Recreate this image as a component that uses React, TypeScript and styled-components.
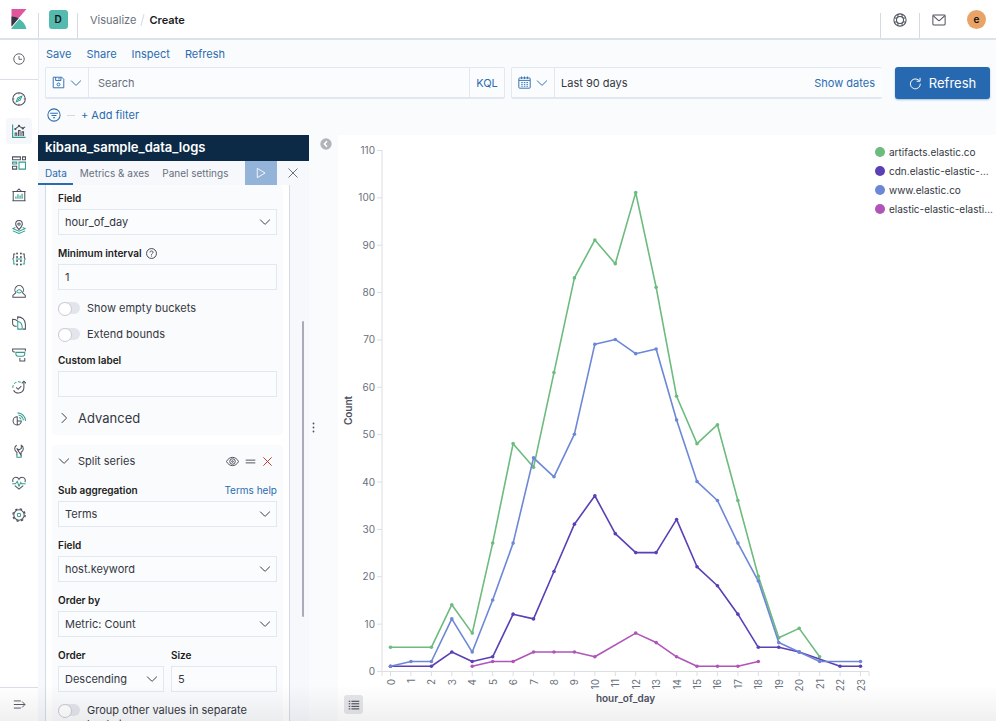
import React, { useId, useLayoutEffect, useRef, useState } from 'react'
import styled, { createGlobalStyle, css } from 'styled-components'

const blue = '#2a6cb0'
const teal = '#2f9c8d'
const ink = '#343741'
const iconInk = '#4b505c'
const muted = '#69707d'
const line = '#e3e7f0'
const pageBg = '#fafbfd'

const GlobalStyle = createGlobalStyle`
  * {
    box-sizing: border-box;
  }
  body {
    margin: 0;
    background: ${pageBg};
    color: ${ink};
    font-family: Inter, 'Liberation Sans', sans-serif;
    font-size: 11px;
    line-height: 16px;
  }
  button,
  input,
  select {
    margin: 0;
    padding: 0;
    border: 0;
    border-radius: 0;
    background: none;
    color: inherit;
    font: inherit;
  }
  button {
    cursor: pointer;
  }
  a {
    color: ${blue};
    text-decoration: none;
  }
  svg {
    display: block;
    flex: none;
  }
`

/* ---------- icons ---------- */

type IconProps = { size?: number; children: React.ReactNode; width?: number }

const Icon: React.FC<IconProps> = ({ size = 14, width = 1.15, children }) => (
  <svg
    width={size}
    height={size}
    viewBox="0 0 16 16"
    fill="none"
    stroke="currentColor"
    strokeWidth={width}
    aria-hidden="true"
  >
    {children}
  </svg>
)

const ChevronDown = () => (
  <Icon size={12} width={1.3}>
    <path d="M1.5 4.8 L7.4 10.7 Q8 11.2 8.6 10.7 L14.5 4.8" />
  </Icon>
)

const ChevronRight = () => (
  <Icon size={12} width={1.3}>
    <path d="M5 1.5 L10.9 7.4 Q11.4 8 10.9 8.6 L5 14.5" />
  </Icon>
)

const CrossIcon = ({ size = 12 }: { size?: number }) => (
  <Icon size={size} width={1.3}>
    <path d="M2 2 L14 14 M14 2 L2 14" />
  </Icon>
)

const KibanaLogo = () => (
  <svg width="16" height="20" viewBox="0 0 16 20" aria-hidden="true">
    <path d="M0.5 0 H15.5 L0.5 17.5 Z" fill="#e0559c" />
    <path d="M0.5 7.5 C3.2 7.5 5.5 8.2 7.5 9.4 L0.5 17.5 Z" fill="#343741" />
    <path d="M8.3 9.9 C12 12.2 14.5 15.7 15.4 20 H0.5 V19 Z" fill="#4fb9ac" />
  </svg>
)

const navIcons: { name: string; art: React.ReactNode }[] = [
  {
    name: 'Discover',
    art: (
      <>
        <circle cx="8" cy="8" r="7.2" />
        <path d="M8 1v1.6M8 13.4V15M1 8h1.6M13.4 8H15" />
        <path d="M11.2 4.8 L9.4 9.4 L4.8 11.2 L6.6 6.6 Z" stroke={teal} />
        <path d="M6.9 9.1 L9.1 6.9" stroke={teal} />
      </>
    ),
  },
  {
    name: 'Visualize',
    art: (
      <>
        <path d="M0.7 0.5 V15.3 H15.5" stroke={teal} strokeWidth="1.3" />
        <path d="M3.6 13.6V10.2h1.8v3.4M7.4 13.6V7.4h1.8v6.2M11.4 13.6V9h1.8v4.6" />
        <path d="M3.8 5.6 L8 2.4 L12.3 5 L15 3.2" />
        <g fill={iconInk} stroke="none">
          <circle cx="3.8" cy="5.8" r="1.3" />
          <circle cx="8" cy="2.2" r="1.3" />
          <circle cx="12.4" cy="5" r="1.3" />
        </g>
      </>
    ),
  },
  {
    name: 'Dashboard',
    art: (
      <>
        <path d="M0.6 1 H9.6 V4.4 H0.6 Z M12 1 H15.4 V4.4 H12 Z" />
        <path d="M0.6 7 H5.4 V9.2 H0.6 Z" stroke={teal} />
        <path d="M0.6 11.8 H5.4 V15 H0.6 Z" />
        <path d="M8 7 H15.4 V15 H8 Z" stroke={teal} />
      </>
    ),
  },
  {
    name: 'Canvas',
    art: (
      <>
        <path d="M0.4 4 H15.6 M0.4 14.6 H15.6 M1.4 4 V14.6 M14.6 4 V14.6" />
        <path d="M5 4 L8 1 L11 4" />
        <path d="M4.5 12.4V9.6M6.8 12.4V7M9.2 12.4V8.6M11.5 12.4V6.6" stroke={teal} strokeWidth="1.3" />
      </>
    ),
  },
  {
    name: 'Maps',
    art: (
      <>
        <path d="M8 11 C5.3 8.4 4.2 6.7 4.2 4.6 A3.8 3.9 0 0 1 11.8 4.6 C11.8 6.7 10.7 8.4 8 11 Z" />
        <circle cx="8" cy="4.7" r="1.4" />
        <path d="M3.8 8.6 L1 9.9 L8 12.8 L15 9.9 L12.2 8.6 M1 12.4 L8 15.3 L15 12.4" stroke={teal} />
      </>
    ),
  },
  {
    name: 'Machine Learning',
    art: (
      <>
        <g fill={iconInk} stroke="none">
          <circle cx="5.8" cy="1.8" r="1.1" />
          <circle cx="10.2" cy="1.8" r="1.1" />
          <circle cx="5.8" cy="5.8" r="1.1" />
          <circle cx="10.2" cy="5.8" r="1.1" />
          <circle cx="5.8" cy="10.2" r="1.1" />
          <circle cx="10.2" cy="10.2" r="1.1" />
          <circle cx="5.8" cy="14.2" r="1.1" />
          <circle cx="10.2" cy="14.2" r="1.1" />
        </g>
        <path d="M3.8 2.4 H2 V6 L0.9 8 M12.2 2.4 H14 V6 L15.1 8" />
        <path d="M0.9 8 L2 10 V13.6 H3.8 M15.1 8 L14 10 V13.6 H12.2 M4.4 8 H11.6" stroke={teal} />
      </>
    ),
  },
  {
    name: 'Metrics',
    art: (
      <>
        <path d="M4.6 10 A4.9 4.9 0 1 1 11.8 10" />
        <path d="M4.6 9.8 L1 13 V15.2 H15.2 V13 L11.8 9.8" />
        <path d="M5.2 8.6 Q8.2 4.8 11.4 8.6 Q8.2 12 5.2 8.6" stroke={teal} />
      </>
    ),
  },
  {
    name: 'Logs',
    art: (
      <>
        <path d="M6.5 4 V1 C11.5 1 15.3 4.6 15.3 9.4 V15 H12.6" />
        <path d="M5.4 11.6 H4 C2 11.6 0.7 10 0.7 8 V3.6 C3 3.6 5.4 4.4 6.6 6" />
        <path d="M6.6 15 V6 C10 7 11.7 9.6 11.7 13 V15 Z" stroke={teal} />
      </>
    ),
  },
  {
    name: 'APM',
    art: (
      <>
        <path d="M3.4 4.6 H2.4 Q0.7 4.6 0.7 3.2 V1.2 H15.3 V3.6" />
        <path d="M4.4 5 H14.6 V6.6 Q14.6 9.4 12 9.4 H7 Q4.4 9.4 4.4 6.6 Z" stroke={teal} />
        <path d="M9 11.4 V14.8 H14.6 V11.4" />
      </>
    ),
  },
  {
    name: 'Uptime',
    art: (
      <>
        <path d="M13.6 2.2 V8.6 A6.3 6.3 0 0 1 1.8 11.6" />
        <path d="M11.2 3.8 L13.6 1.4 L16 3.8" />
        <path d="M1 9 A6.4 6.4 0 0 1 10 2.6" stroke={teal} strokeDasharray="3.2 1.8" />
        <path d="M4.8 8.4 L7 10.6 L10.6 7" />
      </>
    ),
  },
  {
    name: 'SIEM',
    art: (
      <>
        <path d="M6 5.4 A4.7 4.7 0 1 0 10.6 10.4 H6 Z M6 10 V14.8" />
        <path
          d="M6.4 1 A9 9 0 0 1 15.4 10.4 M7.4 3.4 A6.9 6.9 0 0 1 13 9.6 M8.2 6.2 A4 4 0 0 1 10.4 8.4"
          stroke={teal}
        />
      </>
    ),
  },
  {
    name: 'Dev Tools',
    art: (
      <>
        <path d="M5.4 1.4 C2.4 3 2.2 7.6 5.6 9.4 V12.8 M10.4 12.8 V9.4 C13.8 7.6 13.6 3 10.6 1.4 V5.2 L8 6.8 L5.4 5.2 Z" />
        <path d="M5.6 12.6 V15.2 H10.4 V12.6" stroke={teal} />
      </>
    ),
  },
  {
    name: 'Stack Monitoring',
    art: (
      <>
        <path d="M1.2 7 C0 3.6 2.2 1.4 4.4 1.4 C6.2 1.4 7.4 2.4 8 3.8 C8.6 2.4 9.8 1.4 11.6 1.4 C13.8 1.4 16 3.6 14.8 7" />
        <path d="M3.2 11 L8 15 L12.8 11" />
        <path d="M0.4 8.8 H4 L6 6 L8 11.6 L10 7.4 L11 8.8 H15.6" stroke={teal} />
      </>
    ),
  },
  {
    name: 'Management',
    art: (
      <>
        <circle cx="8" cy="8" r="5.9" />
        <circle cx="8" cy="8" r="7" strokeDasharray="2.75 2.75" strokeWidth="1.5" />
        <circle cx="8" cy="8" r="2" stroke={teal} />
      </>
    ),
  },
]

/* ---------- shell ---------- */

const Page = styled.div`
  display: flex;
  flex-direction: column;
  height: 100vh;
  overflow: hidden;
  position: relative;

  &::after {
    content: '';
    position: absolute;
    inset: auto 0 0 0;
    height: 36px;
    background: linear-gradient(rgba(40, 44, 52, 0), rgba(40, 44, 52, 0.07));
    pointer-events: none;
  }
`

const Header = styled.header`
  display: flex;
  align-items: center;
  height: 40px;
  flex: none;
  background: #fff;
  border-bottom: 2px solid #dde1eb;
`

const LogoLink = styled.a`
  display: flex;
  justify-content: center;
  width: 38px;
`

const HeaderSection = styled.div`
  display: flex;
  align-items: center;
  justify-content: center;
  align-self: flex-end;
  width: 39px;
  height: 25px;
  padding-bottom: 12px;
  border-left: 1px solid #d3dae6;
  color: ${iconInk};
`

const Badge = styled.button<{ $round?: boolean }>`
  flex: none;
  width: 19px;
  height: 19px;
  border-radius: ${p => (p.$round ? '50%' : '3px')};
  background: ${p => (p.$round ? '#e9a367' : '#54b9ae')};
  color: #111;
  font-size: 10px;
  font-weight: 600;
  line-height: 19px;
`

const Breadcrumbs = styled.nav`
  display: flex;
  flex: 1;
  align-self: flex-end;
  align-items: center;
  height: 25px;
  padding: 0 0 12px 12px;
  gap: 6px;
  border-left: 1px solid #d3dae6;

  a {
    color: ${muted};
  }
  i {
    width: 1px;
    height: 12px;
    background: #d3dae6;
    transform: rotate(15deg);
  }
  strong {
    color: #1a1c21;
    font-weight: 600;
  }
`

const IconButton = styled.button`
  display: flex;
  align-items: center;
  justify-content: center;
`

const HeaderUser = styled.div`
  padding: 0 10px 0 9px;
`

const Columns = styled.div`
  display: flex;
  flex: 1;
  min-height: 0;
`

const SideNav = styled.nav`
  display: flex;
  flex-direction: column;
  flex: none;
  width: 38px;
  background: #fff;
  box-shadow: 1px 0 0 #eceff5;
`

const NavGroup = styled.div<{ $edge?: 'top' | 'bottom' }>`
  display: flex;
  align-items: center;
  justify-content: center;
  height: ${p => (p.$edge === 'top' ? 34 : 40)}px;
  ${p => p.$edge === 'top' && 'border-top: 1px solid #d9deea;'}
  ${p => p.$edge === 'bottom' && 'border-bottom: 1px solid #d9deea; padding-bottom: 2px;'}
  color: ${iconInk};
`

const NavList = styled.ul`
  flex: 1;
  margin: 0;
  padding: 3px 0 0;
  list-style: none;
`

const NavItem = styled.li`
  display: flex;
  align-items: center;
  justify-content: center;
  height: 32px;
`

const NavLink = styled.a<{ $active: boolean }>`
  display: flex;
  align-items: center;
  justify-content: center;
  width: 26px;
  height: 26px;
  border-radius: 3px;
  background: ${p => (p.$active ? '#f5f7fa' : 'none')};
  color: ${iconInk};
`

const Main = styled.main`
  display: flex;
  flex-direction: column;
  flex: 1;
  min-width: 0;
`

/* ---------- top bars ---------- */

const Menu = styled.div`
  display: flex;
  align-items: center;
  gap: 15px;
  padding: 0 8px;
  height: 27px;
  color: ${blue};
`

const QueryBar = styled.div`
  display: grid;
  grid-template-columns: minmax(0, 1.24fr) minmax(0, 1fr) auto;
  column-gap: 6px;
  padding: 0 6px 0 7px;
`

const FieldGroup = styled.div<{ $open?: boolean }>`
  display: flex;
  height: 32px;
  border: 1px solid ${line};
  border-bottom-width: 2px;
  border-radius: 2px;
  background: #fbfcfe;
  ${p => p.$open && 'border-right: 0;'}
`

const GroupButton = styled.button<{ $side: 'left' | 'right' }>`
  display: flex;
  align-items: center;
  justify-content: center;
  gap: 5px;
  flex: none;
  width: ${p => (p.$side === 'left' ? 43 : 35)}px;
  color: ${blue};
  ${p => (p.$side === 'left' ? 'border-right' : 'border-left')}: 1px solid ${line};
`

const SearchInput = styled.input`
  flex: 1;
  min-width: 0;
  padding: 0 9px;
  outline: none;

  &::placeholder {
    color: ${muted};
    opacity: 1;
  }
`

const RangeButton = styled.button`
  flex: 1;
  padding-left: 6px;
  text-align: left;
`

const TextButton = styled.button`
  padding-right: 7px;
  color: ${blue};
`

const RefreshButton = styled.button`
  display: flex;
  align-items: center;
  justify-content: center;
  gap: 7px;
  width: 95px;
  height: 32px;
  margin-left: 7px;
  border-radius: 3px;
  background: #2769b0;
  box-shadow: 0 1px 2px rgba(39, 105, 176, 0.4);
  color: #fff;
  font-size: 13px;
`

const FilterRow = styled.div`
  display: flex;
  align-items: center;
  gap: 6px;
  height: 36px;
  padding: 0 9px 4px;
  color: ${blue};

  i {
    width: 8px;
    height: 1px;
    background: #d3dae6;
  }
`

/* ---------- editor ---------- */

const Workspace = styled.div`
  display: flex;
  flex: 1;
  min-height: 0;
`

const Editor = styled.section`
  display: flex;
  flex-direction: column;
  flex: none;
  width: 271px;
  min-height: 0;
  background: #f6f8fc;
`

const EditorTitle = styled.h1`
  flex: none;
  margin: 0;
  height: 26px;
  padding-left: 7px;
  background: #0c2a46;
  color: #fff;
  font-size: 13px;
  font-weight: 600;
  line-height: 25px;
`

const Tabs = styled.div`
  display: flex;
  flex: none;
  height: 24px;
  font-size: 10px;
`

const Tab = styled.button<{ $active?: boolean }>`
  padding: 0 6px 0 7px;
  color: ${muted};
  white-space: nowrap;
  ${p =>
    p.$active &&
    css`
      color: ${blue};
      border-bottom: 2px solid ${blue};
      padding-top: 2px;
    `}
`

const ApplyButton = styled(IconButton)`
  width: 32px;
  margin-left: auto;
  background: #93b3d8;
  color: #fff;
`

const DiscardButton = styled(IconButton)`
  width: 32px;
  color: ${muted};
`

const EditorBody = styled.div`
  display: flex;
  flex: 1;
  min-height: 0;
  overflow: hidden;
  padding-left: 7px;
`

const Card = styled.div`
  display: flex;
  flex-direction: column;
  gap: 10px;
  width: 245px;
  padding: 0 6px;
  height: max-content;
  border: 1px solid #d5dae8;
  border-top: 0;
  background: #fff;
`

const Scrollbar = styled.div`
  width: 2px;
  height: 296px;
  margin: 136px 0 0 12px;
  border-radius: 1px;
  background: #a9acb8;
`

const Bucket = styled.div`
  display: flex;
  flex-direction: column;
  gap: 10px;
  padding: 5px 6px 6px;
  border-radius: 4px;
  background: ${pageBg};
`

const BucketHead = styled.div`
  display: flex;
  align-items: center;
  height: 22px;
  gap: 6px;
  padding-right: 4px;
  color: ${iconInk};
`

const BucketToggle = styled.button<{ $large?: boolean }>`
  display: flex;
  align-items: center;
  gap: 8px;
  flex: 1;
  color: ${ink};
  font-size: ${p => (p.$large ? 13 : 11)}px;
`

const RemoveButton = styled(IconButton)`
  color: #bd271e;
`

const FormField = styled.div`
  display: flex;
  flex: 1;
  flex-direction: column;
  gap: 3px;
  min-width: 0;
`

const LabelRow = styled.div`
  display: flex;
  align-items: center;
  gap: 4px;
  height: 16px;
  font-size: 10px;

  label {
    color: #1a1c21;
    font-weight: 600;
  }
  a {
    margin-left: auto;
  }
`

const controlStyle = css`
  width: 100%;
  height: 26px;
  padding: 0 6px;
  border: 1px solid ${line};
  background: #fbfcfe;
  outline: none;
`

const TextInput = styled.input`
  ${controlStyle}
`

const SelectWrap = styled.div`
  position: relative;

  select {
    ${controlStyle}
    appearance: none;
  }
  svg {
    position: absolute;
    top: 7px;
    right: 6px;
    pointer-events: none;
  }
`

const FieldPair = styled.div`
  display: flex;
  gap: 7px;
`

const ToggleRow = styled.label`
  display: flex;
  align-items: flex-start;
  gap: 7px;
  min-height: 16px;
  padding-top: 1px;
  line-height: 14px;
`

const Toggle = styled.input`
  appearance: none;
  display: flex;
  flex: none;
  width: 22px;
  height: 12px;
  margin-top: 1px;
  border-radius: 6px;
  background: #e3e5ec;

  &::before {
    content: '';
    width: 12px;
    height: 12px;
    border: 1px solid #c9ccd5;
    border-radius: 50%;
    background: #fff;
  }
  &:checked {
    justify-content: flex-end;
    background: ${blue};
  }
`

const Gutter = styled.div`
  display: flex;
  flex-direction: column;
  flex: none;
  width: 29px;
  padding-top: 3px;
  color: ${iconInk};
`

const CollapseButton = styled(IconButton)`
  width: 12px;
  height: 12px;
  margin-left: 11px;
`

const Resizer = styled.div`
  display: flex;
  flex: 1;
  align-items: center;
  padding: 0 0 16px 3px;
`

/* ---------- chart ---------- */

const Visualization = styled.section`
  display: flex;
  flex: 1;
  min-width: 0;
  position: relative;
  background: #fff;
`

const ChartBox = styled.div`
  flex: 1;
  min-width: 0;
  overflow: hidden;

  text {
    fill: ${muted};
    font-size: 10px;
  }
  text.title {
    fill: #4d515e;
    font-weight: 600;
  }
`

const Legend = styled.ul`
  flex: none;
  width: 121px;
  margin: 0;
  padding: 7px 2px 0 0;
  list-style: none;
  font-size: 10px;
`

const LegendItem = styled.li<{ $color: string }>`
  display: flex;
  align-items: center;
  gap: 4px;
  height: 19px;

  &::before {
    content: '';
    flex: none;
    width: 10px;
    height: 10px;
    border-radius: 50%;
    background: ${p => p.$color};
  }
  span {
    overflow: hidden;
    text-overflow: ellipsis;
    white-space: nowrap;
  }
`

const LegendToggle = styled(IconButton)`
  position: absolute;
  left: 6px;
  bottom: 7px;
  width: 19px;
  height: 19px;
  border-radius: 3px;
  background: #e4e6ea;
  color: ${ink};
`

type Series = { name: string; color: string; points: [number, number][] }

const fromValues = (start: number, values: (number | null)[]) =>
  values
    .map((v, i) => [start + i, v] as [number, number | null])
    .filter((p): p is [number, number] => p[1] !== null)

const series: Series[] = [
  {
    name: 'artifacts.elastic.co',
    color: '#6dbb7e',
    points: fromValues(0, [5, null, 5, 14, 8, 27, 48, 43, 63, 83, 91, 86, 101, 81, 58, 48, 52, 36, 20, 7, 9, 3]),
  },
  {
    name: 'cdn.elastic-elastic-elastic.org',
    color: '#5b3fb5',
    points: fromValues(0, [1, null, 1, 4, 2, 3, 12, 11, 21, 31, 37, 29, 25, 25, 32, 22, 18, 12, 5, 5, 4, null, 1, 1]),
  },
  {
    name: 'www.elastic.co',
    color: '#6c87d6',
    points: fromValues(0, [1, 2, 2, 11, 4, 15, 27, 45, 41, 50, 69, 70, 67, 68, 53, 40, 36, 27, 19, 6, 4, 2, null, 2]),
  },
  {
    name: 'elastic-elastic-elastic.org',
    color: '#b055b8',
    points: fromValues(4, [1, 2, 2, 4, 4, 4, 3, null, 8, 6, 3, 1, 1, 1, 2]),
  },
]

const yMax = 110
const hours = Array.from({ length: 24 }, (_, i) => i)
const counts = Array.from({ length: 12 }, (_, i) => i * 10)
const pad = { top: 15, right: 6, bottom: 50, left: 44 }

const LineChart = () => {
  const box = useRef<HTMLDivElement>(null)
  const [size, setSize] = useState({ width: 0, height: 0 })

  useLayoutEffect(() => {
    const el = box.current
    if (!el) return
    const measure = () => setSize({ width: el.clientWidth, height: el.clientHeight })
    measure()
    const observer = new ResizeObserver(measure)
    observer.observe(el)
    return () => observer.disconnect()
  }, [])

  const right = size.width - pad.right
  const bottom = size.height - pad.bottom
  const x = (hour: number) => pad.left + 8.5 + (hour * (right - pad.left - 17)) / 23
  const y = (count: number) => bottom - (count * (bottom - pad.top)) / yMax
  const middleX = (pad.left + right) / 2
  const middleY = (pad.top + bottom) / 2

  return (
    <ChartBox ref={box}>
      {size.width > 0 && (
        <svg width={size.width} height={size.height} role="img" aria-label="Count by hour_of_day">
          <g stroke="#dcdee3" fill="none">
            <path d={`M${pad.left} ${pad.top} V${bottom + 5} M${pad.left} ${bottom + 0.5} H${right} V${bottom + 5}`} />
            {counts.map(c => (
              <path key={c} d={`M${pad.left - 5} ${y(c) + 0.5} H${pad.left}`} />
            ))}
            {hours.map(h => (
              <path key={h} d={`M${x(h)} ${bottom} V${bottom + 5}`} />
            ))}
          </g>
          {counts.map(c => (
            <text key={c} x={pad.left - 7} y={y(c) + 4} textAnchor="end">
              {c}
            </text>
          ))}
          {hours.map(h => (
            <text key={h} transform={`translate(${x(h) + 4} ${bottom + 8}) rotate(-90)`} textAnchor="end">
              {h}
            </text>
          ))}
          <text className="title" x={middleX} y={bottom + 31} textAnchor="middle">
            hour_of_day
          </text>
          <text className="title" transform={`translate(14 ${middleY}) rotate(-90)`} textAnchor="middle">
            Count
          </text>
          {series.map(s => (
            <g key={s.name}>
              <polyline
                points={s.points.map(([h, c]) => `${x(h)},${y(c)}`).join(' ')}
                fill="none"
                stroke={s.color}
                strokeWidth="1.6"
                strokeLinejoin="round"
              />
              {s.points.map(([h, c]) => (
                <circle key={h} cx={x(h)} cy={y(c)} r="1.8" fill={s.color} />
              ))}
            </g>
          ))}
        </svg>
      )}
    </ChartBox>
  )
}

/* ---------- form parts ---------- */

type FieldProps = { label: string; value: string; aside?: React.ReactNode }

const SelectField: React.FC<FieldProps> = ({ label, value, aside }) => {
  const id = useId()
  return (
    <FormField>
      <LabelRow>
        <label htmlFor={id}>{label}</label>
        {aside}
      </LabelRow>
      <SelectWrap>
        <select id={id} defaultValue={value}>
          <option>{value}</option>
        </select>
        <ChevronDown />
      </SelectWrap>
    </FormField>
  )
}

const InputField: React.FC<FieldProps> = ({ label, value, aside }) => {
  const id = useId()
  return (
    <FormField>
      <LabelRow>
        <label htmlFor={id}>{label}</label>
        {aside}
      </LabelRow>
      <TextInput id={id} defaultValue={value} />
    </FormField>
  )
}

const ToggleField: React.FC<{ label: string }> = ({ label }) => (
  <ToggleRow>
    <Toggle type="checkbox" role="switch" />
    <span>{label}</span>
  </ToggleRow>
)

const HelpIcon = () => (
  <Icon size={11} width={1.3}>
    <circle cx="8" cy="8" r="7.2" />
    <path d="M5.8 6.4 C5.8 3.6 10.2 3.6 10.2 6.3 C10.2 8 8 8 8 9.8 M8 11 V12.4" />
  </Icon>
)

const App = () => (
  <>
    <GlobalStyle />
    <Page>
      <Header>
        <LogoLink href="#" aria-label="Kibana home">
          <KibanaLogo />
        </LogoLink>
        <HeaderSection>
          <Badge aria-label="Default space">D</Badge>
        </HeaderSection>
        <Breadcrumbs aria-label="Breadcrumbs">
          <a href="#">Visualize</a>
          <i />
          <strong>Create</strong>
        </Breadcrumbs>
        <HeaderSection>
          <IconButton aria-label="Help">
            <Icon>
              <circle cx="8" cy="8" r="7" />
              <circle cx="8" cy="8" r="4" />
              <path d="M5.6 1.4V4.8M10.4 1.4V4.8M5.6 14.6V11.2M10.4 14.6V11.2M1.4 5.6H4.8M1.4 10.4H4.8M14.6 5.6H11.2M14.6 10.4H11.2" />
            </Icon>
          </IconButton>
        </HeaderSection>
        <HeaderSection>
          <IconButton aria-label="News">
            <Icon>
              <rect x="1" y="2.4" width="14" height="11.2" rx="1" />
              <path d="M1.6 3.2 L7.2 8.4 Q8 9 8.8 8.4 L14.4 3.2" />
            </Icon>
          </IconButton>
        </HeaderSection>
        <HeaderUser>
          <Badge $round aria-label="Account menu">
            e
          </Badge>
        </HeaderUser>
      </Header>

      <Columns>
        <SideNav aria-label="Main">
          <NavGroup $edge="bottom">
            <IconButton aria-label="Recently viewed">
              <Icon size={12}>
                <circle cx="8" cy="8" r="7" />
                <path d="M8 4 V8.4 H12" />
              </Icon>
            </IconButton>
          </NavGroup>
          <NavList>
            {navIcons.map(({ name, art }) => (
              <NavItem key={name}>
                <NavLink href="#" aria-label={name} $active={name === 'Visualize'}>
                  <Icon>{art}</Icon>
                </NavLink>
              </NavItem>
            ))}
          </NavList>
          <NavGroup $edge="top">
            <IconButton aria-label="Expand navigation">
              <Icon size={13}>
                <path d="M1 3.6 H9.6 M1 8 H14.6 M1 12.4 H9.6 M11.2 4.4 L14.8 8 L11.2 11.6" />
              </Icon>
            </IconButton>
          </NavGroup>
        </SideNav>

        <Main>
          <Menu>
            <button>Save</button>
            <button>Share</button>
            <button>Inspect</button>
            <button>Refresh</button>
          </Menu>
          <QueryBar>
            <FieldGroup>
              <GroupButton $side="left" aria-label="Saved queries">
                <Icon size={13}>
                  <path d="M1.5 1.5 H12 L14.5 4 V14.5 H1.5 Z M4.5 1.5 V5.5 H11 V1.5 M8.6 2.4 V4.4" />
                  <circle cx="8" cy="10.4" r="1.8" />
                </Icon>
                <ChevronDown />
              </GroupButton>
              <SearchInput placeholder="Search" aria-label="Search" />
              <GroupButton $side="right">KQL</GroupButton>
            </FieldGroup>
            <FieldGroup $open>
              <GroupButton $side="left" aria-label="Date quick select">
                <Icon size={13}>
                  <rect x="1" y="2.4" width="14" height="12.6" rx="1" />
                  <path d="M1.2 5.4 H14.8 M4.4 0.6 V3.6 M8 0.6 V3.6 M11.6 0.6 V3.6" />
                  <path d="M4 8 H12.4 M4 10.3 H12.4 M4 12.6 H12.4" strokeDasharray="1.8 1.4" />
                </Icon>
                <ChevronDown />
              </GroupButton>
              <RangeButton>Last 90 days</RangeButton>
              <TextButton>Show dates</TextButton>
            </FieldGroup>
            <RefreshButton>
              <Icon size={13} width={1.2}>
                <path d="M13.9 8.2 A6.1 6.1 0 1 1 11.2 3.4 L13 4.8 M13.6 1 V5.2 H9.4" />
              </Icon>
              Refresh
            </RefreshButton>
          </QueryBar>
          <FilterRow>
            <IconButton aria-label="Filter options">
              <Icon size={14}>
                <circle cx="8" cy="8" r="7" />
                <path d="M3.6 6 H12.4 M5.2 8.6 H10.8 M6.8 11.2 H9.2" />
              </Icon>
            </IconButton>
            <i />
            <button>+ Add filter</button>
          </FilterRow>

          <Workspace>
            <Editor>
              <EditorTitle>kibana_sample_data_logs</EditorTitle>
              <Tabs role="tablist">
                <Tab role="tab" aria-selected="true" $active>
                  Data
                </Tab>
                <Tab role="tab">Metrics &amp; axes</Tab>
                <Tab role="tab">Panel settings</Tab>
                <ApplyButton aria-label="Apply changes">
                  <Icon size={12}>
                    <path d="M3 1.8 L13.4 8 L3 14.2 Z" strokeLinejoin="round" />
                  </Icon>
                </ApplyButton>
                <DiscardButton aria-label="Discard changes">
                  <CrossIcon />
                </DiscardButton>
              </Tabs>
              <EditorBody>
                <Card>
                  <Bucket>
                    <SelectField label="Field" value="hour_of_day" />
                    <InputField label="Minimum interval" value="1" aside={<HelpIcon />} />
                    <ToggleField label="Show empty buckets" />
                    <ToggleField label="Extend bounds" />
                    <InputField label="Custom label" value="" />
                    <BucketHead>
                      <BucketToggle $large>
                        <ChevronRight />
                        Advanced
                      </BucketToggle>
                    </BucketHead>
                  </Bucket>
                  <Bucket>
                    <BucketHead>
                      <BucketToggle>
                        <ChevronDown />
                        Split series
                      </BucketToggle>
                      <IconButton aria-label="Disable">
                        <Icon size={13} width={1.2}>
                          <path d="M0.6 8 C4 1.2 12 1.2 15.4 8 C12 14.8 4 14.8 0.6 8 Z" />
                          <circle cx="8" cy="8" r="3.4" />
                          <circle cx="8" cy="8" r="1" />
                        </Icon>
                      </IconButton>
                      <IconButton aria-label="Reorder">
                        <Icon size={11} width={1.4}>
                          <path d="M1 6 H15 M1 10 H15" />
                        </Icon>
                      </IconButton>
                      <RemoveButton aria-label="Remove">
                        <CrossIcon size={11} />
                      </RemoveButton>
                    </BucketHead>
                    <SelectField label="Sub aggregation" value="Terms" aside={<a href="#">Terms help</a>} />
                    <SelectField label="Field" value="host.keyword" />
                    <SelectField label="Order by" value="Metric: Count" />
                    <FieldPair>
                      <SelectField label="Order" value="Descending" />
                      <InputField label="Size" value="5" />
                    </FieldPair>
                    <ToggleField label="Group other values in separate buckets" />
                  </Bucket>
                </Card>
                <Scrollbar />
              </EditorBody>
            </Editor>
            <Gutter>
              <CollapseButton aria-label="Collapse editor">
                <svg width="12" height="12" viewBox="0 0 12 12" fill="none">
                  <circle cx="6" cy="6" r="5.7" fill="#b1b4bb" />
                  <path d="M7 3.2 L4.4 6 L7 8.8" stroke="#fff" strokeWidth="1.5" />
                </svg>
              </CollapseButton>
              <Resizer>
                <svg width="3" height="11" viewBox="0 0 3 11" fill="currentColor">
                  <circle cx="1.5" cy="1.5" r="0.9" />
                  <circle cx="1.5" cy="5.5" r="0.9" />
                  <circle cx="1.5" cy="9.5" r="0.9" />
                </svg>
              </Resizer>
            </Gutter>
            <Visualization>
              <LineChart />
              <Legend>
                {series.map(s => (
                  <LegendItem key={s.name} $color={s.color}>
                    <span>{s.name}</span>
                  </LegendItem>
                ))}
              </Legend>
              <LegendToggle aria-label="Toggle legend">
                <Icon size={12} width={1.3}>
                  <path d="M1 3 H3 M1 6.4 H3 M1 9.8 H3 M1 13.2 H3 M4.6 3 H15 M4.6 6.4 H15 M4.6 9.8 H15 M4.6 13.2 H15" />
                </Icon>
              </LegendToggle>
            </Visualization>
          </Workspace>
        </Main>
      </Columns>
    </Page>
  </>
)

export default App
